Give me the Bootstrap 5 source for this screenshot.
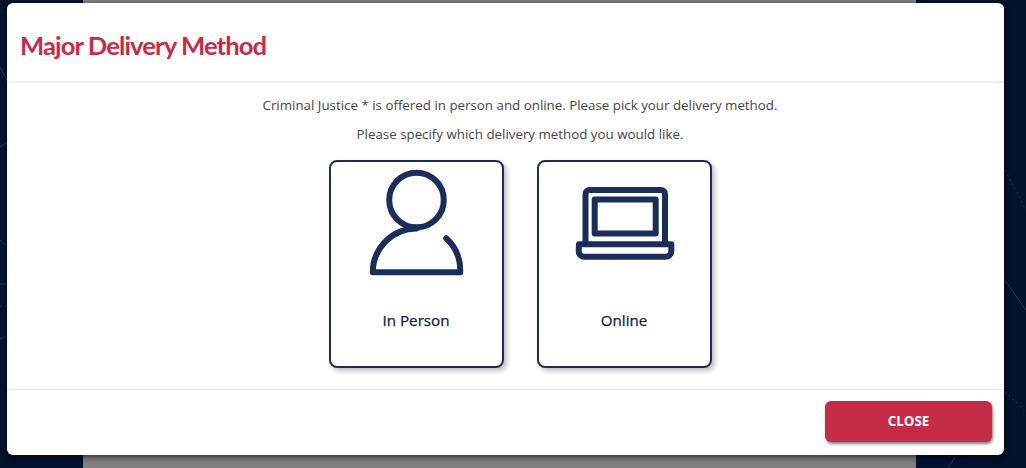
<!DOCTYPE html>
<html lang="en">
<head>
<meta charset="utf-8">
<title>Major Delivery Method</title>
<link rel="stylesheet" href="https://cdn.jsdelivr.net/npm/bootstrap@5.3.0/dist/css/bootstrap.min.css">
<style>
html,body{height:100%;margin:0;overflow:hidden}
body{background:#00122e;font-family:"Open Sans",sans-serif}
.page-strip{flex:none;height:468px;display:block;fill:none;stroke:#2b3a55;stroke-width:1}
.page-strip .dotted{stroke-dasharray:2 3}
.backdrop-panel{flex:none;width:833px;height:468px;background:#808080}
.sheet{position:absolute;left:7px;top:3px;width:997px;height:452px;background:#fff;border:0;border-radius:6px;box-shadow:0 2px 6px rgba(0,0,0,.65)}
.sheet .modal-header{height:80px;padding:8px 13px 0;border-bottom:2px solid #efefef}
.sheet .modal-title{font-family:Lato,sans-serif;font-weight:700;font-size:25.6px;letter-spacing:-.9px;color:#c42c48;line-height:1}
.sheet .modal-body{padding:12px 0 0 29px;height:306px;flex:none;color:#444}
.sheet .modal-footer{flex:1;padding:0 12px 2px 0;border-top:1px solid #e6e6e6;align-items:center}
.intro{font-size:13.33px;line-height:20px;margin:0 0 9px;color:#454545}
.choices{gap:33px;margin-top:16px}
.choice{width:175px;height:208px;padding:4px 0 0;background:#fff;border:2px solid #1b2d5b;border-radius:8px;box-shadow:3px 3px 5px rgba(0,0,0,.25);color:#0f2146;font-size:15.2px;font-weight:400;-webkit-text-stroke:.25px #0f2146}
.choice svg{width:110px;height:110px;display:block;fill:none;stroke:#1b2d5b;stroke-width:6;stroke-linecap:round;stroke-linejoin:round}
.choice-label{margin-top:34px;line-height:20px}
.close-btn{width:167px;height:41px;padding:0;margin:0;border:0;border-radius:6px;background:#c42c48;color:#fff;font-weight:700;font-size:13.33px;box-shadow:1px 2px 3px rgba(0,0,0,.5)}
</style>
</head>
<body>
<div class="d-flex">
  <svg class="page-strip" width="83" height="468" viewBox="0 0 83 468" aria-hidden="true">
    <path d="M0 147L6 143M0 240L6 245M0 284H7M0 339L6 336M0 67L7 80"/>
    <path class="dotted" d="M0 306H7"/>
  </svg>
  <div class="backdrop-panel"></div>
  <svg class="page-strip" width="110" height="468" viewBox="916 0 110 468" aria-hidden="true">
    <path d="M1004 279L1026 310M955 457L948 468"/>
    <path class="dotted" d="M1005 170L1026 210M1005 392L1026 412"/>
  </svg>
</div>
<div class="modal-content sheet">
  <div class="modal-header">
    <h5 class="modal-title">Major Delivery Method</h5>
  </div>
  <div class="modal-body text-center">
    <p class="intro">Criminal Justice * is offered in person and online. Please pick your delivery method.</p>
    <p class="intro">Please specify which delivery method you would like.</p>
    <div class="d-flex justify-content-center choices">
      <button type="button" class="choice d-flex flex-column align-items-center">
        <svg viewBox="0 0 110 110" aria-hidden="true">
          <circle cx="55.5" cy="34" r="27.3"/>
          <path d="M55.5 62.6A43.7 43.7 0 0 0 11.8 106.3H99.2A44 44 0 0 0 85.2 72.3"/>
        </svg>
        <span class="choice-label">In Person</span>
      </button>
      <button type="button" class="choice d-flex flex-column align-items-center">
        <svg viewBox="0 0 110 110" aria-hidden="true">
          <path d="M16.5 78V28a4 4 0 0 1 4-4H92a4 4 0 0 1 4 4V78"/>
          <rect x="25.7" y="33.5" width="61" height="34" />
          <path d="M10 78.2H102.3V85a5.8 5.8 0 0 1-5.8 5.8H15.5A5.8 5.8 0 0 1 9.7 85Z"/>
        </svg>
        <span class="choice-label">Online</span>
      </button>
    </div>
  </div>
  <div class="modal-footer">
    <button type="button" class="btn close-btn">CLOSE</button>
  </div>
</div>
<script src="https://cdn.jsdelivr.net/npm/bootstrap@5.3.0/dist/js/bootstrap.bundle.min.js"></script>
</body>
</html>
